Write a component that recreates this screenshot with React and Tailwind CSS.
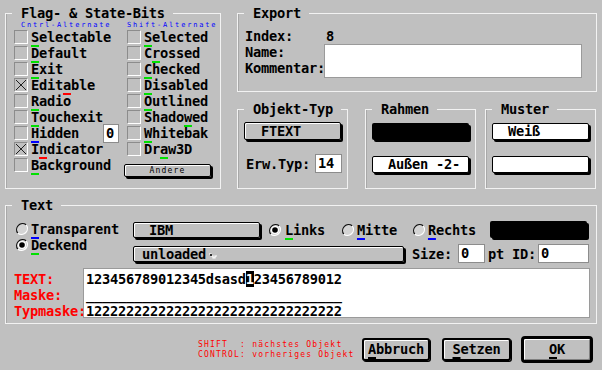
import { useEffect } from 'react'

const mono = "font-['DejaVu_Sans_Mono','Liberation_Mono',monospace]"
const big = `${mono} font-bold text-[13.7px] tracking-[-0.25px] leading-4`
const tiny = `${mono} font-normal text-[7px] tracking-[1.8px] leading-[8px] whitespace-nowrap`
const small = `${mono} font-normal text-[8px] tracking-[1.2px] leading-[9.5px] whitespace-nowrap`

// coloured shortcut underline
function K({ c = 'g', children }) {
    const col = c === 'r' ? 'decoration-[#ff0000]' : c === 'b' ? 'decoration-[#0000ff]' : c === 'k' ? 'decoration-black' : 'decoration-[#00e000]'
    return <span className={`underline decoration-2 underline-offset-[3px] ${col}`}>{children}</span>
}

function Check({ on, label }) {
    return (
        <div className="flex items-center h-4 gap-[3px]">
            <span className="relative w-[14px] h-[14px] shrink-0 border border-t-[#8c8c8c] border-l-[#8c8c8c] border-b-white border-r-white">
                {on && (
                    <svg className="absolute inset-0" width="12" height="12" viewBox="0 0 12 12">
                        <path d="M1 1L11 11M11 1L1 11" stroke="#202020" strokeWidth="1" />
                    </svg>
                )}
            </span>
            <span>{label}</span>
        </div>
    )
}

function Radio({ on }) {
    return (
        <svg width="14" height="14" viewBox="0 0 14 14" className="shrink-0">
            <circle cx="7" cy="7" r="6" fill="#d4d4d4" />
            <path d="M2.8 11.2A6 6 0 0 1 11.2 2.8" fill="none" stroke="#101010" strokeWidth="1.2" />
            <path d="M11.2 2.8A6 6 0 0 1 2.8 11.2" fill="none" stroke="#ffffff" strokeWidth="1.2" />
            {on && <circle cx="7" cy="7" r="4" fill="#ffffff" />}
            {on && <circle cx="7" cy="7" r="2.8" fill="#000000" />}
        </svg>
    )
}

function Group({ title, className, children }) {
    return (
        <fieldset className={`border border-[#f2f2f2] shadow-[inset_1px_0_0_#a8a8a8] min-w-0 ${className}`}>
            <legend className={`${big} ml-[6px] pl-[9px] pr-[8px]`}>{title}</legend>
            {children}
        </fieldset>
    )
}

const btn = 'rounded-[2px] border border-black shadow-[2px_2px_0_#000,inset_1px_1px_0_#fff]'

function SetField({ className, children }) {
    return <div className={`bg-white border border-[#9a9a9a] ${className}`}>{children}</div>
}

export default function App() {
    useEffect(() => {
        document.title = 'Objekt-Flags'
    }, [])

    const left = [
        [false, <><K>S</K>electable</>],
        [false, <><K>D</K>efault</>],
        [false, <><K>E</K>xit</>],
        [true, <>Edit<K c="r">a</K>ble</>],
        [false, <><K>R</K>adio</>],
        [false, <><K>T</K>ouchexit</>],
    ]
    const right = [
        [false, <><K>S</K>elected</>],
        [false, <>C<K>r</K>ossed</>],
        [false, <><K>C</K>hecked</>],
        [false, <><K>D</K>isabled</>],
        [false, <><K>O</K>utlined</>],
        [false, <>Shado<K>w</K>ed</>],
        [false, <><K>W</K>hitebak</>],
        [false, <>Dr<K>a</K>w3D</>],
    ]

    return (
        <div className={`w-[602px] h-[370px] bg-[#c0c0c0] text-black overflow-hidden pt-[5px] ${big}`}>
            <div className="flex h-[184px]">
                {/* Flag- & State-Bits */}
                <Group title="Flag- & State-Bits" className="ml-[5px] w-[216px] h-[184px]">
                    <div className="flex pl-[8px]">
                        <div className="w-[113px]">
                            <div className={`${tiny} text-[#0000ff] h-[8px] pl-[7px]`}>Cntrl-Alternate</div>
                            {left.map(([on, l], i) => <Check key={i} on={on} label={l} />)}
                            <div className="flex items-center h-4">
                                <Check on={false} label={<><K c="b">H</K>idden</>} />
                                <div className="ml-auto mr-[8px] w-[16px] h-[19px] bg-white border border-[#8c8c8c] pl-[2px] leading-[17px]">0</div>
                            </div>
                            <Check on label={<>I<K c="r">n</K>dicator</>} />
                            <Check on={false} label={<><K>B</K>ackground</>} />
                        </div>
                        <div className="w-[90px]">
                            <div className={`${tiny} text-[#0000ff] h-[8px]`}>Shift-Alternate</div>
                            {right.map(([on, l], i) => <Check key={i} on={on} label={l} />)}
                            <div className={`mt-[7px] -ml-[3px] w-[87px] h-[13px] ${btn} ${small} text-center leading-[11px]`}>Andere</div>
                        </div>
                    </div>
                </Group>

                <div className="ml-[16px] w-[360px] flex flex-col">
                    {/* Export */}
                    <Group title="Export" className="h-[87px]">
                        <div className="pl-[7px] pt-[7px]">
                            <div className="flex h-4">
                                <span className="w-[81px]">Index:</span>
                                <span>8</span>
                            </div>
                            <div className="flex">
                                <div className="w-[79px]">
                                    <div className="h-4">Name:</div>
                                    <div className="h-4">Kommentar:</div>
                                </div>
                                <SetField className="w-[258px] h-[34px]" />
                            </div>
                        </div>
                    </Group>

                    <div className="flex mt-[9px]">
                        <Group title="Objekt-Typ" className="w-[111px] h-[88px]">
                            <div className="pl-[6px] pt-[5px]">
                                <div className={`w-[97px] h-[18px] ${btn} pl-[16px] leading-[16px]`}>FTEXT</div>
                                <div className="flex items-center mt-[14px] gap-[5px] pl-[2px]">
                                    <span>Erw.Typ:</span>
                                    <div className="w-[27px] h-[19px] bg-white border border-[#8c8c8c] pl-[2px] leading-[17px]">14</div>
                                </div>
                            </div>
                        </Group>
                        <Group title="Rahmen" className="ml-[17px] w-[111px] h-[88px]">
                            <div className="pl-[6px] pt-[6px]">
                                <div className="w-[97px] h-[17px] bg-black rounded-[2px] shadow-[2px_2px_0_#000]" />
                                <div className="mt-[16px] w-[97px] h-[17px] bg-white border border-black rounded-[2px] shadow-[2px_2px_0_#000] pl-[15px] leading-[15px]">Außen -2-</div>
                            </div>
                        </Group>
                        <Group title="Muster" className="ml-[9px] w-[111px] h-[88px]">
                            <div className="pl-[6px] pt-[6px]">
                                <div className="w-[97px] h-[17px] bg-white border border-black rounded-[2px] shadow-[2px_2px_0_#000] pl-[15px] leading-[15px]">Weiß</div>
                                <div className="mt-[16px] w-[97px] h-[17px] bg-white border border-black rounded-[2px] shadow-[2px_2px_0_#000]" />
                            </div>
                        </Group>
                    </div>
                </div>
            </div>

            {/* Text */}
            <Group title="Text" className="mt-[8px] ml-[5px] w-[592px] h-[127px]">
                <div className="flex pt-[7px]">
                    <div className="w-[127px] pl-[9px] pt-[1px]">
                        <div className="flex items-center h-4 gap-[2px]"><Radio /><span><K c="b">T</K>ransparent</span></div>
                        <div className="flex items-center h-4 gap-[2px]"><Radio on /><span><K>D</K>eckend</span></div>
                    </div>
                    <div>
                        <div className="flex items-center h-[19px]">
                            <div className={`w-[127px] h-[16px] ${btn} pl-[15px] leading-[14px]`}>IBM</div>
                            <div className="ml-[8px] flex items-center gap-[3px]"><Radio on /><span><K>L</K>inks</span></div>
                            <div className="ml-[16px] flex items-center gap-[2px]"><Radio /><span><K c="b">M</K>itte</span></div>
                            <div className="ml-[15px] flex items-center gap-[2px]"><Radio /><span><K c="b">R</K>echts</span></div>
                            <div className="ml-[14px] w-[97px] h-[17px] bg-black rounded-[2px] shadow-[2px_2px_0_#000]" />
                        </div>
                        <div className="flex items-center mt-[5px] h-[19px]">
                            <div className={`w-[271px] h-[16px] ${btn} pl-[8px] leading-[14px] flex items-center`}>
                                <span>unloaded</span>
                                <svg width="10" height="6" viewBox="0 0 10 6" className="ml-[2px] mt-[4px]">
                                    <path d="M1 1h2v2h2v2h2v-2h2" fill="none" stroke="#ffffff" strokeWidth="1.2" />
                                    <rect x="2" y="1" width="2" height="2" fill="#303030" />
                                </svg>
                            </div>
                            <span className="ml-[8px]">Size:</span>
                            <div className="ml-[6px] w-[27px] h-[19px] bg-white border border-[#8c8c8c] pl-[2px] leading-[17px]">0</div>
                            <span className="ml-[3px]">pt ID:</span>
                            <div className="ml-[2px] w-[51px] h-[19px] bg-white border border-[#8c8c8c] pl-[2px] leading-[17px]">0</div>
                        </div>
                    </div>
                </div>
                <div className="flex mt-[5px] pl-[8px]">
                    <div className="w-[69px] pt-[3px] text-[#ff0000] whitespace-nowrap">
                        <div>TEXT:</div>
                        <div>Maske:</div>
                        <div>Typmaske:</div>
                    </div>
                    <SetField className="w-[507px] h-[50px] pt-[2px] pl-[2px] whitespace-pre">
                        <div>123456789012345dsasd<span className="bg-black text-white">1</span>23456789012</div>
                        <div>________________________________</div>
                        <div>12222222222222222222222222222222</div>
                    </SetField>
                </div>
            </Group>

            {/* bottom bar */}
            <div className="flex items-center mt-[12px] pl-[198px]">
                <div className={`${small} text-[#ff0000] whitespace-pre w-[158px]`}>
                    <div>SHIFT  : nächstes Objekt</div>
                    <div>CONTROL: vorheriges Objekt</div>
                </div>
                <div className="ml-[6px] w-[68px] h-[23px] rounded-[3px] border-2 border-black shadow-[1px_1px_0_#000,inset_1px_1px_0_#fff] text-center leading-[19px]"><K c="k">A</K>bbruch</div>
                <div className="ml-[12px] w-[69px] h-[23px] rounded-[3px] border-2 border-black shadow-[1px_1px_0_#000,inset_1px_1px_0_#fff] text-center leading-[19px]"><K c="k">S</K>etzen</div>
                <div className="ml-[10px] w-[72px] h-[27px] rounded-[4px] border-[3px] border-black shadow-[inset_1px_1px_0_#fff,inset_-1px_-1px_0_#808080] text-center leading-[21px]"><K c="k">O</K>K</div>
            </div>
        </div>
    )
}
